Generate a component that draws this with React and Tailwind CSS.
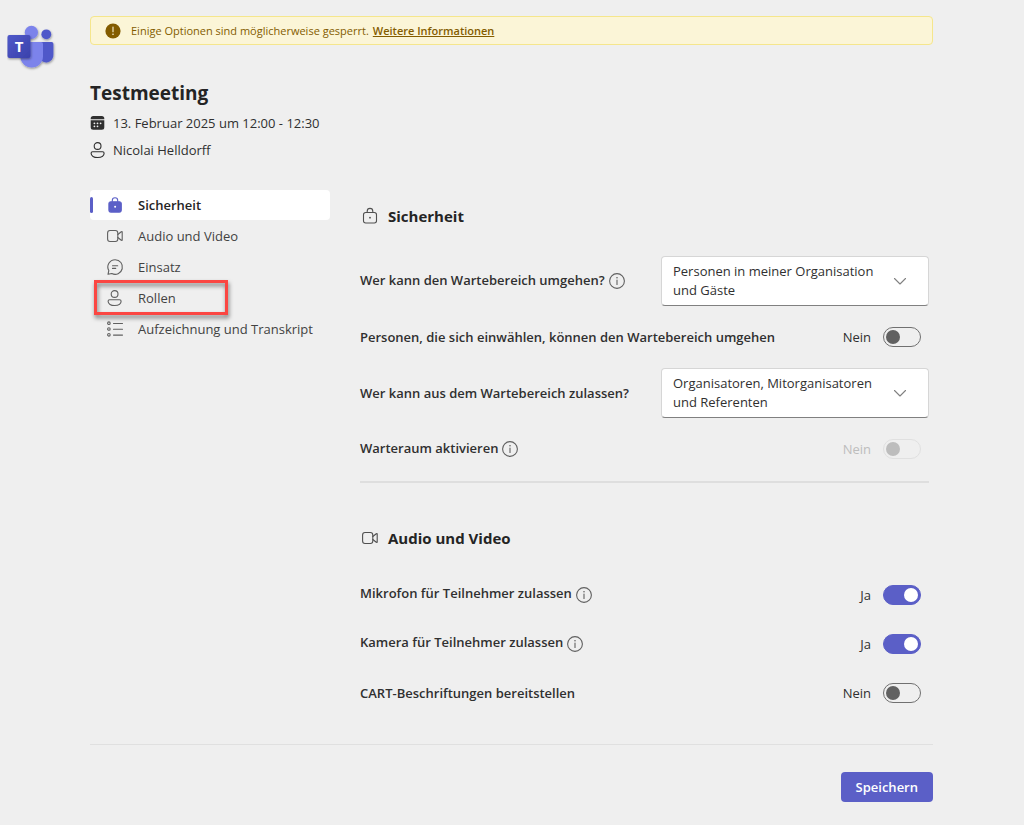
import { useState } from "react";

function TeamsLogo() {
  return (
    <svg viewBox="0 0 50 48" className="h-12 w-[50px]" role="img" aria-label="Microsoft Teams">
      <defs>
        <linearGradient id="tile" x1="0" y1="0" x2="1" y2="1">
          <stop offset="0" stopColor="#5059c9" />
          <stop offset="1" stopColor="#3a41ab" />
        </linearGradient>
        <filter id="soft" x="-20%" y="-20%" width="150%" height="150%">
          <feDropShadow dx="0.5" dy="1.2" stdDeviation="0.9" floodColor="#000" floodOpacity="0.4" />
        </filter>
      </defs>
      <g filter="url(#soft)">
        <circle cx="39.3" cy="9.3" r="4.9" fill="#5059c9" />
        <path d="M32 17h12.600a1.800 1.800 0 0 1 1.800 1.800v10.700a7 7 0 0 1-14.400 1.500z" fill="#5059c9" />
        <circle cx="24.400" cy="7.300" r="6.600" fill="#7b83eb" />
        <path d="M14 17h20a2 2 0 0 1 2 2v12.300a11.300 11.300 0 0 1-22.600 0V19z" fill="#7b83eb" />
      </g>
      <g filter="url(#soft)">
        <rect x="0.500" y="10" width="23" height="23" rx="2" fill="url(#tile)" />
      </g>
      <text x="12" y="26.700" textAnchor="middle" fontSize="15" fontWeight="700" fill="#fff" fontFamily="Open Sans, sans-serif">
        T
      </text>
    </svg>
  );
}

function Icon({ children }) {
  return (
    <svg viewBox="0 0 16 16" className="size-4 shrink-0 overflow-visible" fill="none" stroke="currentColor" strokeWidth="1.1" strokeLinecap="round" strokeLinejoin="round" aria-hidden="true">
      {children}
    </svg>
  );
}

const LockFilled = () => (
  <Icon>
    <path d="M5.300 4.500V3.400a2.700 2.700 0 0 1 5.400 0v1.100" />
    <rect x="1.900" y="4.700" width="12.400" height="10.400" rx="2" fill="currentColor" />
    <circle cx="8.100" cy="9.700" r="1" fill="#fff" stroke="none" />
  </Icon>
);

const LockOutline = () => (
  <Icon>
    <path d="M5.200 4.500V3.200a2.800 2.800 0 0 1 5.600 0v1.300" />
    <rect x="1.500" y="4.500" width="13" height="10.500" rx="2.200" />
    <circle cx="8" cy="9.700" r="0.900" fill="currentColor" stroke="none" />
  </Icon>
);

const VideoIcon = () => (
  <Icon>
    <rect x="0.600" y="2.500" width="10.200" height="11" rx="2.400" />
    <path d="M10.800 6.500 14.300 3.700a.5.5 0 0 1 .9.400v7.800a.5.5 0 0 1-.9.400L10.800 9.500" />
  </Icon>
);

const ChatIcon = () => (
  <Icon>
    <path d="M8.200 0.700a7.300 7.300 0 1 1-3.400 13.800L1 15.300l.8-3.700A7.300 7.300 0 0 1 8.200.7z" />
    <path d="M5.500 6.700h5.200M5.500 9.400h3.200" />
  </Icon>
);

const PersonIcon = () => (
  <Icon>
    <circle cx="7.600" cy="4" r="3.400" />
    <path d="M2.600 9.800h10a1.500 1.500 0 0 1 1.500 1.500c0 2.700-2.800 4.200-6.500 4.200s-6.500-1.500-6.500-4.200a1.500 1.500 0 0 1 1.500-1.500z" />
  </Icon>
);

const ListIcon = () => (
  <Icon>
    <circle cx="1.900" cy="2.200" r="1.300" />
    <circle cx="1.900" cy="8" r="1.300" />
    <circle cx="1.900" cy="13.800" r="1.300" />
    <path d="M6.500 2.500h9M6.500 8.300h9M6.500 14.100h9" />
  </Icon>
);

const CalendarIcon = () => (
  <Icon>
    <path d="M.7 4.200V3.500A2.500 2.500 0 0 1 3.200 1h8.600a2.500 2.500 0 0 1 2.500 2.500v.7z" fill="currentColor" stroke="none" />
    <path d="M.7 5.200h13.600v7a2.500 2.500 0 0 1-2.500 2.500H3.200a2.500 2.500 0 0 1-2.500-2.500z" fill="currentColor" stroke="none" />
    <g fill="#efefef" stroke="none">
      <circle cx="7.500" cy="8.300" r="0.900" />
      <circle cx="10.600" cy="8.300" r="0.900" />
      <circle cx="4.400" cy="8.300" r="0.900" />
      <circle cx="4.400" cy="11.300" r="0.900" />
      <circle cx="7.500" cy="11.300" r="0.900" />
    </g>
  </Icon>
);

const InfoIcon = () => (
  <Icon>
    <circle cx="8" cy="8" r="7.400" />
    <path d="M8 7v4.500" />
    <circle cx="8" cy="4.800" r="0.800" fill="currentColor" stroke="none" />
  </Icon>
);

function NavItem({ icon, label, active, marked }) {
  return (
    <li className="relative">
      <a
        href="#"
        aria-current={active ? "page" : undefined}
        className={
          active
            ? "flex h-[30px] items-center rounded bg-white font-semibold text-[#242424]"
            : "flex h-[30px] items-center rounded text-[#424242]"
        }
      >
        <span className={active ? "h-4 w-[3px] rounded-sm bg-[#5b5fc7]" : "h-4 w-[3px]"} />
        <span className={active ? "ml-3.5 text-[#5b5fc7]" : "ml-3.5 text-[#606060]"}>{icon}</span>
        <span className="ml-[15px]">{label}</span>
      </a>
      {marked && (
        <span className="pointer-events-none absolute -top-[3px] left-1 h-[35px] w-[134px] border-3 border-[#fb4642] drop-shadow-[1px_3px_2px_rgba(0,0,0,0.5)]" />
      )}
    </li>
  );
}

function SettingLabel({ id, info, children }) {
  return (
    <div className="flex items-center gap-1">
      <label htmlFor={id} className={info ? "pb-[3px] font-semibold text-[#303030]" : "font-semibold text-[#303030]"}>
        {children}
      </label>
      {info && (
        <button type="button" aria-label="Weitere Details" className="text-[#606060]">
          <InfoIcon />
        </button>
      )}
    </div>
  );
}

function SwitchRow({ id, label, info, initial = false, disabled = false, rowClass }) {
  const [on, setOn] = useState(initial);
  return (
    <div className={`flex items-center justify-between pr-2 ${rowClass}`}>
      <SettingLabel id={id} info={info}>
        {label}
      </SettingLabel>
      <div className="flex items-center gap-3">
        <span className={disabled ? "text-[#bdbdbd]" : "text-[#303030]"}>{on ? "Ja" : "Nein"}</span>
        <input
          id={id}
          type="checkbox"
          role="switch"
          checked={on}
          disabled={disabled}
          onChange={(e) => setOn(e.target.checked)}
          className="flex h-5 w-[38px] appearance-none items-center rounded-full border border-[#707070] px-0.5 before:size-3.5 before:rounded-full before:bg-[#616161] checked:justify-end checked:border-[#5b5fc7] checked:bg-[#5b5fc7] checked:before:bg-white disabled:border-[#e0e0e0] disabled:before:bg-[#bdbdbd]"
        />
      </div>
    </div>
  );
}

function SelectRow({ id, label, info, options }) {
  const [value, setValue] = useState(options[0]);
  return (
    <div className="flex h-14 items-center justify-between">
      <SettingLabel id={id} info={info}>
        {label}
      </SettingLabel>
      <div className="relative flex min-h-[50px] w-[268px] items-center justify-between rounded border border-[#d6d6d6] border-b-[#808080] bg-white pr-5 pl-[11px]">
        <span aria-hidden="true" className="w-[212px] leading-[19px] text-[#303030]">
          {value}
        </span>
        <svg viewBox="0 0 16 16" className="size-4 shrink-0" fill="none" stroke="#808080" strokeWidth="1.100" strokeLinecap="round" strokeLinejoin="round" aria-hidden="true">
          <path d="M2.500 5.500 8 11l5.500-5.500" />
        </svg>
        <select id={id} value={value} onChange={(e) => setValue(e.target.value)} className="absolute inset-0 size-full cursor-pointer opacity-0">
          {options.map((o) => (
            <option key={o}>{o}</option>
          ))}
        </select>
      </div>
    </div>
  );
}

function SectionHeading({ icon, children }) {
  return (
    <h2 className="flex h-6 items-center gap-2.5 pl-0.5 text-[15px] font-bold text-[#242424]">
      <span className="text-[#505050]">{icon}</span>
      {children}
    </h2>
  );
}

export default function App() {
  return (
    <div className="flex min-h-screen bg-[#efefef] font-['Open_Sans','Noto_Sans',sans-serif] text-[13px] leading-5 text-[#303030]">
      <aside className="w-[90px] shrink-0 pt-[25px] pl-[7px]">
        <TeamsLogo />
      </aside>
      <main className="min-w-0 flex-1 pt-4 pr-[91px] pb-[23px]">
        <div role="status" className="flex h-[29px] items-center rounded border border-[#f5e68c] bg-[#fbf5d7] pl-3.5 text-[11px] text-[#835c00]">
          <svg viewBox="0 0 16 16" className="size-4 shrink-0" aria-hidden="true">
            <circle cx="8" cy="8" r="7.600" fill="#835c00" />
            <path d="M8 4v4.800" stroke="#fbf5d7" strokeWidth="1.100" strokeLinecap="round" />
            <circle cx="8" cy="11.300" r="0.800" fill="#fbf5d7" />
          </svg>
          <p className="ml-2.5">
            Einige Optionen sind möglicherweise gesperrt.
            <a href="#" className="ml-1 font-semibold underline">
              Weitere Informationen
            </a>
          </p>
        </div>

        <header className="mt-[34px]">
          <h1 className="text-[19px] leading-7 font-bold text-[#242424]">Testmeeting</h1>
          <p className="mt-1.5 flex items-center gap-[7px]">
            <CalendarIcon />
            13. Februar 2025 um 12:00 - 12:30
          </p>
          <p className="mt-[7px] flex items-center gap-[7px]">
            <PersonIcon />
            Nicolai Helldorff
          </p>
        </header>

        <div className="mt-[30px] flex gap-[30px]">
          <nav className="w-60 shrink-0" aria-label="Besprechungsoptionen">
            <ul className="flex flex-col gap-px">
              <NavItem icon={<LockFilled />} label="Sicherheit" active />
              <NavItem icon={<VideoIcon />} label="Audio und Video" />
              <NavItem icon={<ChatIcon />} label="Einsatz" />
              <NavItem icon={<PersonIcon />} label="Rollen" marked />
              <NavItem icon={<ListIcon />} label="Aufzeichnung und Transkript" />
            </ul>
          </nav>

          <div className="min-w-0 flex-1 pt-3.5 pr-1">
            <section>
              <SectionHeading icon={<LockOutline />}>Sicherheit</SectionHeading>
              <div className="mt-[25px] border-b-2 border-[#dedede] pb-1">
                <SelectRow
                  id="bypass"
                  label="Wer kann den Wartebereich umgehen?"
                  info
                  options={["Personen in meiner Organisation und Gäste", "Nur Organisatoren", "Jeder"]}
                />
                <SwitchRow id="dialin" label="Personen, die sich einwählen, können den Wartebereich umgehen" rowClass="h-14" />
                <SelectRow
                  id="admit"
                  label="Wer kann aus dem Wartebereich zulassen?"
                  options={["Organisatoren, Mitorganisatoren und Referenten", "Organisatoren und Mitorganisatoren"]}
                />
                <SwitchRow id="greenroom" label="Warteraum aktivieren" info disabled rowClass="h-14" />
              </div>
            </section>
            <section className="mt-[43px]">
              <SectionHeading icon={<VideoIcon />}>Audio und Video</SectionHeading>
              <div className="mt-5">
                <SwitchRow id="mic" label="Mikrofon für Teilnehmer zulassen" info initial rowClass="h-[49px]" />
                <SwitchRow id="cam" label="Kamera für Teilnehmer zulassen" info initial rowClass="h-[49px]" />
                <SwitchRow id="cart" label="CART-Beschriftungen bereitstellen" rowClass="h-[49px]" />
              </div>
            </section>
          </div>
        </div>

        <footer className="mt-[27px] flex justify-end border-t border-[#e0e0e0] pt-[27px]">
          <button type="button" className="h-[30px] rounded bg-[#5b5fc7] px-[15px] font-semibold text-white">
            Speichern
          </button>
        </footer>
      </main>
    </div>
  );
}
